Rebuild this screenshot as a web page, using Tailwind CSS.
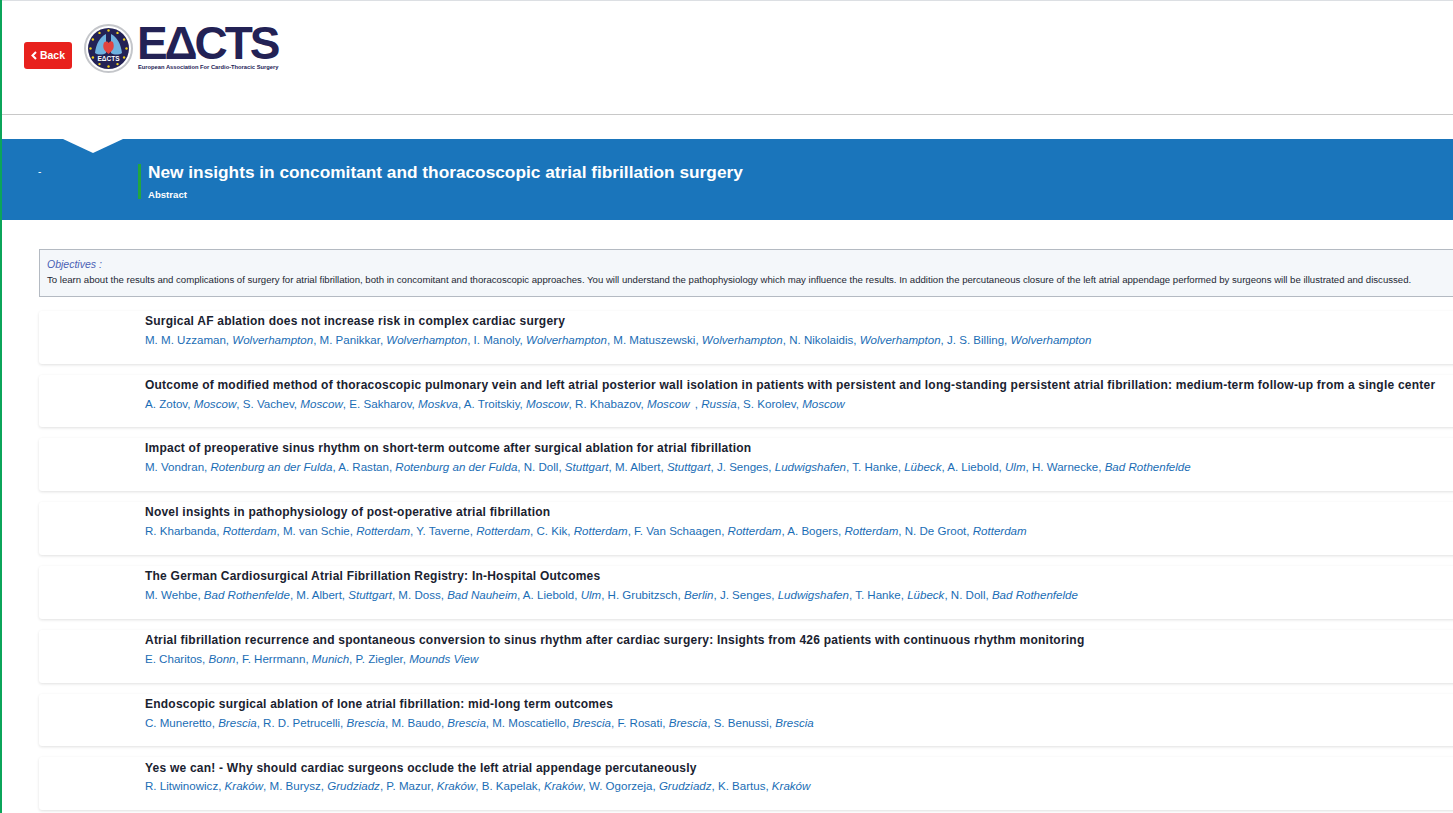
<!DOCTYPE html>
<html>
<head>
<meta charset="utf-8">
<script src="https://cdn.jsdelivr.net/npm/@tailwindcss/browser@4"></script>
</head>
<body class="bg-white font-['Liberation_Sans',Arial,sans-serif] overflow-hidden">
<div class="h-[813px] w-[1453px] overflow-hidden border-l-2 border-[#0ba55a]">
  <header class="h-[115px] border-t border-b border-t-[#dcdfe3] border-b-[#c8c8c8] flex items-start pl-[22px] pt-[23px] gap-[12px]">
    <a class="mt-[18px] w-[48px] h-[27px] bg-[#e8211d] rounded-[3px] text-white text-[10.5px] font-bold flex items-center justify-center gap-[3px]">
      <svg width="6" height="9" viewBox="0 0 6 9"><path d="M5 1 1.5 4.5 5 8" fill="none" stroke="#fff" stroke-width="2"/></svg>Back</a>
    <div class="flex items-start gap-[5px]">
      <svg width="49" height="49" viewBox="0 0 49 49" class="shrink-0">
        <circle cx="24.5" cy="24.5" r="23.5" fill="#fff" stroke="#c4c6ca" stroke-width="2"/>
        <circle cx="24.5" cy="24.5" r="20.5" fill="#232255"/>
        <path d="M22 10c-6 3-10 10-11 19 3 2 8 2 11 0zM27 10c6 3 10 10 11 19-3 2-8 2-11 0z" fill="#6fb2e0"/>
        <path d="M24.5 30c-4-3-6-6-5-10 1-3 4-3 5-1 2-3 5-2 5 1 1 4-1 7-5 10z" fill="#e2433f"/>
        <g fill="#f2d21b">
          <circle cx="24.5" cy="6.5" r="1.2"/><circle cx="33.5" cy="8.9" r="1.2"/><circle cx="40.1" cy="15.5" r="1.2"/><circle cx="42.5" cy="24.5" r="1.2"/><circle cx="40.1" cy="33.5" r="1.2"/><circle cx="33.5" cy="40.1" r="1.2"/><circle cx="24.5" cy="42.5" r="1.2"/><circle cx="15.5" cy="40.1" r="1.2"/><circle cx="8.9" cy="33.5" r="1.2"/><circle cx="6.5" cy="24.5" r="1.2"/><circle cx="8.9" cy="15.5" r="1.2"/><circle cx="15.5" cy="8.9" r="1.2"/>
        </g>
        <text x="24.5" y="37" text-anchor="middle" font-size="6.5" font-weight="700" fill="#fff" font-family="Liberation Sans">EΔCTS</text>
      </svg>
      <div class="text-[#232255] leading-none -ml-[1px]">
        <div class="text-[46px] font-bold tracking-[-3.1px] h-[38px] leading-[38px] whitespace-nowrap">EΔCTS</div>
        <div class="text-[5.75px] font-bold whitespace-nowrap mt-[3px] ml-[1px]">European Association For Cardio-Thoracic Surgery</div>
      </div>
    </div>
  </header>

  <section class="relative mt-[24px] h-[81px] bg-[#1a75bb] text-white flex items-start pt-[25px]">
    <svg class="absolute left-[61px] top-0" width="60" height="14" viewBox="0 0 60 14"><path d="M0 0h60L30 14z" fill="#fff"/></svg>
    <div class="w-[136px] pl-[36px] text-[10px] leading-[16px]">-</div>
    <div class="border-l-[3px] border-[#22a63f] pl-[7px] h-[35px]">
      <h1 class="text-[17.28px] font-bold leading-[16px]">New insights in concomitant and thoracoscopic atrial fibrillation surgery</h1>
      <p class="text-[9.6px] font-bold leading-[12px] mt-[9px]">Abstract</p>
    </div>
  </section>

  <main class="pl-[37px] pt-[29px]">
    <div class="w-[1500px] h-[48px] border border-[#b4bac2] bg-[#f4f7fa] pl-[7px] pt-[8px]">
      <p class="text-[10.5px] italic text-[#4a5fb5] leading-[12px]">Objectives :</p>
      <p class="text-[9.6px] text-[#1c2733] leading-[12px] mt-[4px] whitespace-nowrap">To learn about the results and complications of surgery for atrial fibrillation, both in concomitant and thoracoscopic approaches. You will understand the pathophysiology which may influence the results. In addition the percutaneous closure of the left atrial appendage performed by surgeons will be illustrated and discussed.</p>
    </div>

    <div class="mt-[13.8px] flex flex-col gap-[11px] w-[1500px]">
      <article class="h-[52.82px] rounded-[3px] bg-white shadow-[0_1px_3px_rgba(0,0,0,0.12)] pl-[106px] pt-[3px] whitespace-nowrap">
        <h2 class="text-[12px] font-bold tracking-[0.225px] text-[#1a2230] leading-[14px]">Surgical AF ablation does not increase risk in complex cardiac surgery</h2>
        <p class="text-[11.55px] text-[#1a6db5] leading-[14px] mt-[4.92px]">M. M. Uzzaman, <i>Wolverhampton</i>, M. Panikkar, <i>Wolverhampton</i>, I. Manoly, <i>Wolverhampton</i>, M. Matuszewski, <i>Wolverhampton</i>, N. Nikolaidis, <i>Wolverhampton</i>, J. S. Billing, <i>Wolverhampton</i></p>
      </article>
      <article class="h-[52.82px] rounded-[3px] bg-white shadow-[0_1px_3px_rgba(0,0,0,0.12)] pl-[106px] pt-[3px] whitespace-nowrap">
        <h2 class="text-[12px] font-bold tracking-[0.225px] text-[#1a2230] leading-[14px]">Outcome of modified method of thoracoscopic pulmonary vein and left atrial posterior wall isolation in patients with persistent and long-standing persistent atrial fibrillation: medium-term follow-up from a single center</h2>
        <p class="text-[11.6px] text-[#1a6db5] leading-[14px] mt-[4.92px]">A. Zotov, <i>Moscow</i>, S. Vachev, <i>Moscow</i>, E. Sakharov, <i>Moskva</i>, A. Troitskiy, <i>Moscow</i>, R. Khabazov, <i>Moscow</i><span class="ml-[2px]"> , </span><i>Russia</i>, S. Korolev, <i>Moscow</i></p>
      </article>
      <article class="h-[52.82px] rounded-[3px] bg-white shadow-[0_1px_3px_rgba(0,0,0,0.12)] pl-[106px] pt-[3px] whitespace-nowrap">
        <h2 class="text-[12px] font-bold tracking-[0.225px] text-[#1a2230] leading-[14px]">Impact of preoperative sinus rhythm on short-term outcome after surgical ablation for atrial fibrillation</h2>
        <p class="text-[11.55px] text-[#1a6db5] leading-[14px] mt-[4.92px]">M. Vondran, <i>Rotenburg an der Fulda</i>, A. Rastan, <i>Rotenburg an der Fulda</i>, N. Doll, <i>Stuttgart</i>, M. Albert, <i>Stuttgart</i>, J. Senges, <i>Ludwigshafen</i>, T. Hanke, <i>Lübeck</i>, A. Liebold, <i>Ulm</i>, H. Warnecke, <i>Bad Rothenfelde</i></p>
      </article>
      <article class="h-[52.82px] rounded-[3px] bg-white shadow-[0_1px_3px_rgba(0,0,0,0.12)] pl-[106px] pt-[3px] whitespace-nowrap">
        <h2 class="text-[12px] font-bold tracking-[0.225px] text-[#1a2230] leading-[14px]">Novel insights in pathophysiology of post-operative atrial fibrillation</h2>
        <p class="text-[11.55px] text-[#1a6db5] leading-[14px] mt-[4.92px]">R. Kharbanda, <i>Rotterdam</i>, M. van Schie, <i>Rotterdam</i>, Y. Taverne, <i>Rotterdam</i>, C. Kik, <i>Rotterdam</i>, F. Van Schaagen, <i>Rotterdam</i>, A. Bogers, <i>Rotterdam</i>, N. De Groot, <i>Rotterdam</i></p>
      </article>
      <article class="h-[52.82px] rounded-[3px] bg-white shadow-[0_1px_3px_rgba(0,0,0,0.12)] pl-[106px] pt-[3px] whitespace-nowrap">
        <h2 class="text-[12px] font-bold tracking-[0.225px] text-[#1a2230] leading-[14px]">The German Cardiosurgical Atrial Fibrillation Registry: In-Hospital Outcomes</h2>
        <p class="text-[11.55px] text-[#1a6db5] leading-[14px] mt-[4.92px]">M. Wehbe, <i>Bad Rothenfelde</i>, M. Albert, <i>Stuttgart</i>, M. Doss, <i>Bad Nauheim</i>, A. Liebold, <i>Ulm</i>, H. Grubitzsch, <i>Berlin</i>, J. Senges, <i>Ludwigshafen</i>, T. Hanke, <i>Lübeck</i>, N. Doll, <i>Bad Rothenfelde</i></p>
      </article>
      <article class="h-[52.82px] rounded-[3px] bg-white shadow-[0_1px_3px_rgba(0,0,0,0.12)] pl-[106px] pt-[3px] whitespace-nowrap">
        <h2 class="text-[12px] font-bold tracking-[0.225px] text-[#1a2230] leading-[14px]">Atrial fibrillation recurrence and spontaneous conversion to sinus rhythm after cardiac surgery: Insights from 426 patients with continuous rhythm monitoring</h2>
        <p class="text-[11.55px] text-[#1a6db5] leading-[14px] mt-[4.92px]">E. Charitos, <i>Bonn</i>, F. Herrmann, <i>Munich</i>, P. Ziegler, <i>Mounds View</i></p>
      </article>
      <article class="h-[52.82px] rounded-[3px] bg-white shadow-[0_1px_3px_rgba(0,0,0,0.12)] pl-[106px] pt-[3px] whitespace-nowrap">
        <h2 class="text-[12px] font-bold tracking-[0.225px] text-[#1a2230] leading-[14px]">Endoscopic surgical ablation of lone atrial fibrillation: mid-long term outcomes</h2>
        <p class="text-[11.55px] text-[#1a6db5] leading-[14px] mt-[4.92px]">C. Muneretto, <i>Brescia</i>, R. D. Petrucelli, <i>Brescia</i>, M. Baudo, <i>Brescia</i>, M. Moscatiello, <i>Brescia</i>, F. Rosati, <i>Brescia</i>, S. Benussi, <i>Brescia</i></p>
      </article>
      <article class="h-[52.82px] rounded-[3px] bg-white shadow-[0_1px_3px_rgba(0,0,0,0.12)] pl-[106px] pt-[3.3px] whitespace-nowrap">
        <h2 class="text-[12px] font-bold tracking-[0.225px] text-[#1a2230] leading-[14px]">Yes we can! - Why should cardiac surgeons occlude the left atrial appendage percutaneously</h2>
        <p class="text-[11.55px] text-[#1a6db5] leading-[14px] mt-[4.62px]">R. Litwinowicz, <i>Kraków</i>, M. Burysz, <i>Grudziadz</i>, P. Mazur, <i>Kraków</i>, B. Kapelak, <i>Kraków</i>, W. Ogorzeja, <i>Grudziadz</i>, K. Bartus, <i>Kraków</i></p>
      </article>
    </div>
  </main>
</div>
</body>
</html>
